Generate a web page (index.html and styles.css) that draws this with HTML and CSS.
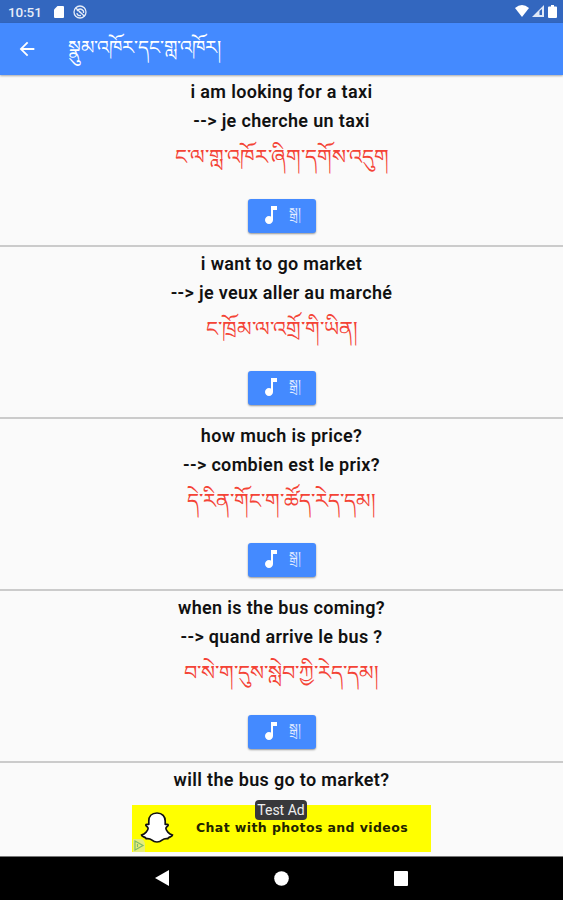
FILE: index.html
```html
<!DOCTYPE html>
<html lang="bo">
<head>
<meta charset="utf-8">
<title>སྣུམ་འཁོར་དང་གླ་འཁོར།</title>
<link rel="stylesheet" href="styles.css">
</head>
<body>
<svg width="0" height="0" class="defs"><defs>
<symbol id="note" viewBox="0 0 24 24"><path d="M12 3v10.55c-.59-.34-1.27-.55-2-.55-2.21 0-4 1.790-4 4s1.790 4 4 4 4-1.790 4-4V7h4V3h-6z" fill="#fff"/></symbol>
</defs></svg>
<header class="status">
  <span class="clock">10:51</span>
  <svg class="sd" viewBox="0 0 10 12"><path d="M3.5 0H9q1 0 1 1v10q0 1-1 1H1q-1 0-1-1V3.500z" fill="#fff"/></svg>
  <svg class="ring" viewBox="0 0 14 14" fill="none" stroke="#e6edf8" stroke-width="1.3"><circle cx="7" cy="7" r="6"/><path d="M3 3.200l8.500 8M4 6q3-4 6.500 0v2M4 8q0 3 4 2.500M6 6.500l2.500 2"/></svg>
  <span class="signals">
    <svg width="14" height="12" viewBox="0 0 14 12"><path d="M0 3Q7-3 14 3L7 12z" fill="#fff"/></svg>
    <svg width="13" height="12" viewBox="0 0 13 12"><path d="M0 12L12 0v12z" fill="#dfe8f7"/><path d="M7.500 6v4H10V4z" fill="#3367bf"/></svg>
    <svg width="9" height="13" viewBox="0 0 9 13"><path d="M3 0h3v1.500h2q1 0 1 1V12q0 1-1 1H1q-1 0-1-1V2.500q0-1 1-1h2z" fill="#fff"/></svg>
  </span>
</header>
<nav class="appbar">
  <svg class="back" viewBox="0 0 24 24"><path d="M20 11H7.830l5.590-5.590L12 4l-8 8 8 8 1.410-1.410L7.830 13H20v-2z" fill="#fff"/></svg>
  <h1 class="title">སྣུམ་འཁོར་དང་གླ་འཁོར།</h1>
</nav>
<main class="list">
  <section class="item"><p class="phrase">i am looking for a taxi</p><p class="phrase">--&gt; je cherche un taxi</p><p class="tibetan">ང་ལ་གླ་འཁོར་ཞིག་དགོས་འདུག</p><button class="play"><svg class="note"><use href="#note"/></svg><span class="label">སྒྲ།</span></button></section>
  <section class="item"><p class="phrase">i want to go market</p><p class="phrase">--&gt; je veux aller au marché</p><p class="tibetan">ང་ཁྲོམ་ལ་འགྲོ་གི་ཡིན།</p><button class="play"><svg class="note"><use href="#note"/></svg><span class="label">སྒྲ།</span></button></section>
  <section class="item"><p class="phrase">how much is price?</p><p class="phrase">--&gt; combien est le prix?</p><p class="tibetan">དེ་རིན་གོང་ག་ཚོད་རེད་དམ།</p><button class="play"><svg class="note"><use href="#note"/></svg><span class="label">སྒྲ།</span></button></section>
  <section class="item"><p class="phrase">when is the bus coming?</p><p class="phrase">--&gt; quand arrive le bus ?</p><p class="tibetan">བ་སེ་ག་དུས་སླེབ་ཀྱི་རེད་དམ།</p><button class="play"><svg class="note"><use href="#note"/></svg><span class="label">སྒྲ།</span></button></section>
  <section class="item last"><p class="phrase">will the bus go to market?</p></section>
</main>
<aside class="ad">
  <svg class="ghost" viewBox="0 0 34 32"><path d="M17 1.500c-5.500 0-8.200 3.500-8.200 8v3.200c-1.200.7-2.600-.4-3 .9-.2 1.200 2.300 1.600 2.300 3.100 0 2.400-3 5.600-6.600 6.800.2 2 4 1.600 4.800 3.700 2.400-.5 4 .1 5.700 1.500 1.400 1.300 3 1.800 5 1.800s3.600-.5 5-1.800c1.700-1.400 3.300-2 5.700-1.500.8-2.100 4.600-1.700 4.800-3.700-3.600-1.200-6.600-4.400-6.600-6.800 0-1.500 2.500-1.900 2.300-3.100-.4-1.300-1.800-.2-3-.9V9.500c0-4.500-2.700-8-8.200-8z" fill="#fff" stroke="#111" stroke-width="1.700"/></svg>
  <svg class="choices" viewBox="0 0 12 13"><path d="M0 0h9q3 2 3 6v7H0z" fill="#e6ee7a"/><path d="M2 2l8 4.500L2 11zM4.500 5v3" fill="none" stroke="#7dba68" stroke-width="1.200"/></svg>
  <span class="adtext">Chat with photos and videos</span>
  <span class="badge">Test Ad</span>
</aside>
<footer class="system">
  <svg width="14" height="16" viewBox="0 0 14 16"><path d="M0 8L14 0v16z" fill="#fff"/></svg>
  <svg width="15" height="15" viewBox="0 0 15 15"><circle cx="7.500" cy="7.500" r="7.300" fill="#fff"/></svg>
  <svg width="14" height="15" viewBox="0 0 14 15"><rect width="14" height="15" rx="1" fill="#fff"/></svg>
</footer>
</body>
</html>
```
FILE: styles.css
```css
* { box-sizing: border-box; }
body { margin: 0; height: 900px; overflow: hidden; display: flex; flex-direction: column; background: #fafafa; font-family: Roboto, "Noto Sans", sans-serif; }
svg { display: block; flex: none; }
.defs { position: absolute; }
.status { height: 23px; flex: none; background: #3367bf; color: #e6edf8; display: flex; align-items: center; padding: 0 6px 0 8px; }
.clock { font-size: 13.5px; width: 46px; letter-spacing: -.1px; font-weight: 500; }
.sd { width: 10px; height: 12px; }
.ring { width: 14px; height: 14px; margin-left: 9px; }
.signals { margin-left: auto; display: flex; gap: 3px; align-items: center; margin-top: -1px; }
.appbar { height: 52px; flex: none; background: #448aff; color: #fff; display: flex; align-items: center; padding-left: 16px; box-shadow: 0 1px 2px #0005; z-index: 1; }
.back { width: 22px; height: 22px; }
.title { margin: -3px 0 0 30px; font-size: 19.1px; font-weight: 400; line-height: 40px; white-space: nowrap; }
.list { flex: none; height: 730px; overflow: hidden; }
.item { height: 172px; padding-top: 2px; border-bottom: 2px solid #cbcbcb; display: flex; flex-direction: column; align-items: center; }
.item.last { height: 42px; border: 0; }
.phrase { margin: 0; height: 28.700px; line-height: 29px; font-size: 18px; font-weight: 600; letter-spacing: .34px; color: #111; white-space: nowrap; }
.tibetan { margin: 0; height: 64.200px; line-height: 46px; font-size: 20.8px; color: #f44336; white-space: nowrap; }
.play { width: 68px; height: 34px; flex: none; border: 0; border-radius: 3px; padding: 0 0 0 11px; background: #448aff; color: #e4edff; display: flex; align-items: center; gap: 6px; box-shadow: 0 1px 2px #0006; font: 13px/30px Roboto, sans-serif; }
.note { width: 24px; height: 24px; margin-top: -1px; }
.label { margin-top: -5px; }
.ad { position: relative; flex: none; width: 299px; height: 47px; margin: 0 0 4px 132px; background: #ff0; display: flex; align-items: center; }
.ghost { width: 34px; height: 33px; margin: -3px 0 0 8px; }
.choices { position: absolute; left: 1px; bottom: 0; width: 12px; height: 13px; }
.adtext { margin: -2px 0 0 22px; font: 700 12.5px/20px "DejaVu Sans", sans-serif; letter-spacing: .4px; color: #222400; white-space: nowrap; }
.badge { position: absolute; left: 123px; top: -5px; width: 52px; height: 20px; border-radius: 4px; background: #38383b; color: #eee; text-align: center; font-size: 14px; line-height: 21px; }
.system { height: 44px; flex: none; background: #000; display: flex; align-items: center; justify-content: space-between; padding: 0 155px 1px; border-top: 1px solid #777; }
```
